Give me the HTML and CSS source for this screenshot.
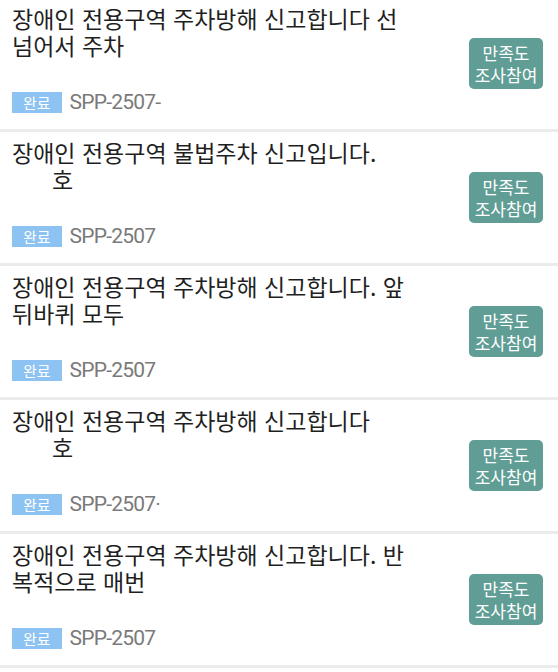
FILE: index.html
```html
<!DOCTYPE html>
<html lang="ko">
<head>
    <meta charset="UTF-8">
    <meta name="viewport" content="width=device-width, initial-scale=1.0">
    <title>신고 내역</title>
    <link rel="stylesheet" href="styles.css">
</head>
<body>

    <!-- Report List -->
    <div class="report-list">

        <div class="report-card">
            <div class="report-info">
                <p class="report-title">장애인 전용구역 주차방해 신고합니다 선 넘어서 주차</p>
                <div class="report-meta">
                    <span class="status">완료</span>
                    <span class="report-no">SPP-2507-</span>
                </div>
            </div>
            <button class="survey-btn">만족도<br>조사참여</button>
        </div>

        <div class="report-card">
            <div class="report-info">
                <p class="report-title">장애인 전용구역 불법주차 신고입니다.<br><span class="plate">호</span></p>
                <div class="report-meta">
                    <span class="status">완료</span>
                    <span class="report-no">SPP-2507</span>
                </div>
            </div>
            <button class="survey-btn">만족도<br>조사참여</button>
        </div>

        <div class="report-card">
            <div class="report-info">
                <p class="report-title">장애인 전용구역 주차방해 신고합니다. 앞 뒤바퀴 모두</p>
                <div class="report-meta">
                    <span class="status">완료</span>
                    <span class="report-no">SPP-2507</span>
                </div>
            </div>
            <button class="survey-btn">만족도<br>조사참여</button>
        </div>

        <div class="report-card">
            <div class="report-info">
                <p class="report-title">장애인 전용구역 주차방해 신고합니다<br><span class="plate">호</span></p>
                <div class="report-meta">
                    <span class="status">완료</span>
                    <span class="report-no">SPP-2507·</span>
                </div>
            </div>
            <button class="survey-btn">만족도<br>조사참여</button>
        </div>

        <div class="report-card">
            <div class="report-info">
                <p class="report-title">장애인 전용구역 주차방해 신고합니다. 반복적으로 매번</p>
                <div class="report-meta">
                    <span class="status">완료</span>
                    <span class="report-no">SPP-2507</span>
                </div>
            </div>
            <button class="survey-btn">만족도<br>조사참여</button>
        </div>

    </div>

</body>
</html>
```

FILE: styles.css
```css
/* Base */
body {
    background-color: #ffffff;
    font-family: "Noto Sans CJK KR", "Noto Sans", sans-serif;
    margin: 0;
    padding: 0;
}

/* Report List */
.report-list {
    display: flex;
    flex-direction: column;
    gap: 3px;
    background-color: #ebebeb;
    margin-top: -2px;
    padding-bottom: 3px;
}

.report-card {
    display: flex;
    align-items: center;
    justify-content: space-between;
    height: 131px;
    padding: 0 15px 0 12px;
    background-color: #ffffff;
    box-sizing: border-box;
}

.report-info {
    width: 408px;
    height: 100%;
    display: flex;
    flex-direction: column;
    justify-content: space-between;
    padding: 7px 0 16px;
    box-sizing: border-box;
}

.report-title {
    margin: 0;
    font-size: 23px;
    line-height: 27px;
    color: #1f1f1f;
    word-break: break-all;
}

.plate {
    padding-left: 40px;
}

/* Status + number */
.report-meta {
    display: flex;
    align-items: center;
    gap: 8px;
}

.status {
    background-color: #8cc3f2;
    color: #ffffff;
    font-size: 15px;
    line-height: 21px;
    padding: 0 11px;
}

.report-no {
    font-family: Roboto, "Liberation Sans", sans-serif;
    font-size: 21px;
    line-height: 21px;
    color: #7a7a7a;
    letter-spacing: -0.8px;
}

/* Survey button */
.survey-btn {
    width: 74px;
    height: 51px;
    padding: 0;
    border: none;
    border-radius: 5px;
    background-color: #5f9d95;
    color: #ffffff;
    font-family: "Noto Sans CJK KR", sans-serif;
    font-size: 17px;
    line-height: 22px;
    text-align: center;
    flex-shrink: 0;
}
```
